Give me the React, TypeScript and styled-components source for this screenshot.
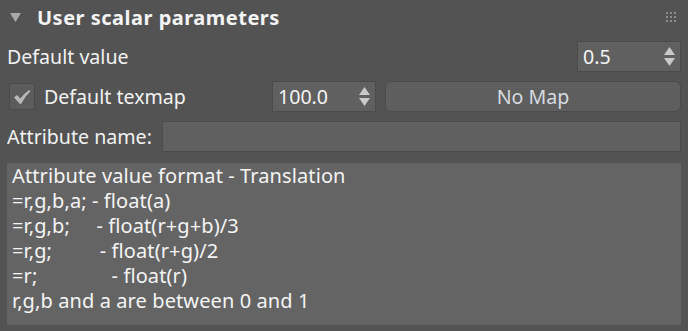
import React from "react";
import styled, { createGlobalStyle } from "styled-components";

const GlobalStyle = createGlobalStyle`
  html, body { margin: 0; padding: 0; background: #535353; }
  body { font-family: "Noto Sans", "Open Sans", sans-serif; color: #f2f2f2; }
  * { box-sizing: border-box; }
`;

const Panel = styled.div`
  width: 688px;
  height: 331px;
  background: #535353;
  padding: 0 7px 6px 7px;
  display: flex;
  flex-direction: column;
`;

const Header = styled.div`
  height: 34px;
  display: flex;
  align-items: center;
  padding: 0 5px 0 3px;
`;

const Title = styled.div`
  font-size: 20px;
  font-weight: 700;
  letter-spacing: 0.5px;
  color: #f4f4f4;
  margin-left: 16px;
  flex: 1;
`;

const Grip = styled.div`
  display: grid;
  grid-template-columns: repeat(3, 2px);
  grid-auto-rows: 2px;
  gap: 2px;
  margin-top: -1px;
`;

const Dot = styled.span`
  background: #8c8c8c;
`;

const Body = styled.div`
  display: flex;
  flex-direction: column;
  gap: 9px;
  padding-top: 7px;
`;

const Row = styled.div`
  height: 31px;
  display: flex;
  align-items: center;
`;

const Label = styled.span<{ $w?: number }>`
  font-size: 19.6px;
  color: #f2f2f2;
  white-space: nowrap;
  ${(p) => (p.$w ? `width: ${p.$w}px; flex: none;` : "")}
`;

const Spacer = styled.div`
  flex: 1;
`;

const SpinnerBox = styled.div<{ $w: number }>`
  width: ${(p) => p.$w}px;
  height: 31px;
  flex: none;
  background: #606060;
  border: 1px solid #4b4b4b;
  display: flex;
  align-items: center;
  padding: 0 5px 0 5px;
`;

const SpinValue = styled.span`
  flex: 1;
  font-size: 19.6px;
  color: #f4f4f4;
`;

const Check = styled.div`
  width: 26px;
  height: 27px;
  margin-left: 2px;
  margin-right: 9px;
  background: #5c5c5c;
  border: 1px solid #4a4a4a;
  display: flex;
  align-items: center;
  justify-content: center;
  flex: none;
`;

const MapButton = styled.div`
  flex: 1;
  height: 31px;
  margin-left: 9px;
  background: #5e5e5e;
  border: 1px solid #4b4b4b;
  border-radius: 6px;
  display: flex;
  align-items: center;
  justify-content: center;
  font-size: 19.6px;
  color: #d6dbe0;
`;

const TextField = styled.div`
  flex: 1;
  height: 31px;
  background: #606060;
  border: 1px solid #4b4b4b;
`;

const Notes = styled.div`
  margin-top: 11px;
  height: 162px;
  background: #646464;
  padding: 0 5px;
`;

const NotesText = styled.div`
  font-size: 20px;
  line-height: 25px;
  color: #f4f4f4;
  white-space: pre;
  letter-spacing: 0.1px;
`;

const Arrows = () => (
  <svg width="11" height="19" viewBox="0 0 11 19">
    <polygon points="5.5,0 11,8 0,8" fill="#c9c9c9" />
    <polygon points="0,11 11,11 5.5,19" fill="#c9c9c9" />
  </svg>
);

const Spinner = ({ value, w }: { value: string; w: number }) => (
  <SpinnerBox $w={w}>
    <SpinValue>{value}</SpinValue>
    <Arrows />
  </SpinnerBox>
);

const lines = [
  "Attribute value format - Translation",
  "=r,g,b,a; - float(a)",
  "=r,g,b;     - float(r+g+b)/3",
  "=r,g;         - float(r+g)/2",
  "=r;              - float(r)",
  "r,g,b and a are between 0 and 1",
];

export default function App() {
  return (
    <>
      <GlobalStyle />
      <Panel>
        <Header>
          <svg width="11" height="9" viewBox="0 0 11 9">
            <polygon points="0,0 11,0 5.5,9" fill="#a8a8a8" />
          </svg>
          <Title>User scalar parameters</Title>
          <Grip>
            {Array.from({ length: 9 }).map((_, i) => (
              <Dot key={i} />
            ))}
          </Grip>
        </Header>
        <Body>
          <Row>
            <Label>Default value</Label>
            <Spacer />
            <Spinner value="0.5" w={104} />
          </Row>
          <Row>
            <Check>
              <svg width="18" height="16" viewBox="0 0 18 16">
                <path
                  d="M1 8.5 L4 6 L7.3 9.6 Q11 4.5 16.2 1 L17.4 2.3 Q12 7.5 8 15 L7 15 Z"
                  fill="#b8b8b8"
                />
              </svg>
            </Check>
            <Label $w={228}>Default texmap</Label>
            <Spinner value="100.0" w={104} />
            <MapButton>No Map</MapButton>
          </Row>
          <Row>
            <Label $w={155}>Attribute name:</Label>
            <TextField />
          </Row>
        </Body>
        <Notes>
          <NotesText>{lines.join("\n")}</NotesText>
        </Notes>
      </Panel>
    </>
  );
}
